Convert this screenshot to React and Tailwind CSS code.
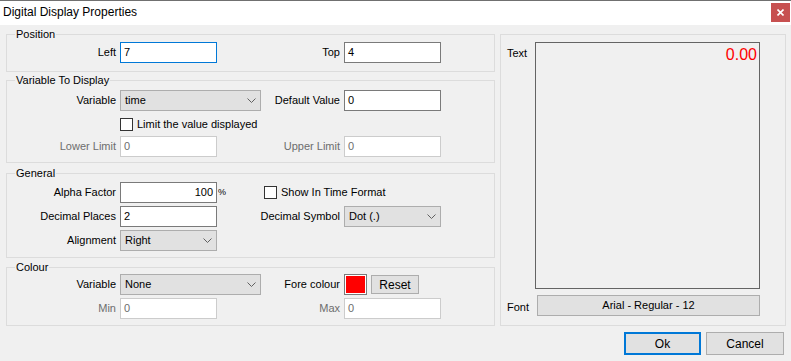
const font = { fontFamily: '"Liberation Sans", Arial, sans-serif' };

function Chevron() {
  return (
    <svg width="9" height="5" viewBox="0 0 9 5" className="shrink-0">
      <path d="M0.5 0.5 L4.5 4.5 L8.5 0.5" fill="none" stroke="#606060" strokeWidth="1" />
    </svg>
  );
}

function Group({ title, className, children }) {
  return (
    <div className={`relative border border-[#dcdcdc] ${className}`}>
      <span className="absolute -top-[8px] left-[8px] px-[1px] bg-[#f0f0f0] text-[11px] leading-[14px] text-black">
        {title}
      </span>
      {children}
    </div>
  );
}

function Label({ w, children, disabled }) {
  return (
    <div
      className={`shrink-0 text-right pr-[4px] text-[11px] leading-[13px] ${disabled ? 'text-[#6d6d6d]' : 'text-black'}`}
      style={{ width: w }}
    >
      {children}
    </div>
  );
}

function Input({ value, w = 97, focused, disabled, right }) {
  return (
    <div
      className={`h-[21px] shrink-0 bg-white border flex items-center px-[3px] text-[11px] leading-[13px] ${
        focused ? 'border-[#0078d7]' : disabled ? 'border-[#cccccc] text-[#6d6d6d]' : 'border-[#7a7a7a] text-black'
      } ${right ? 'justify-end' : ''}`}
      style={{ width: w }}
    >
      {value}
    </div>
  );
}

function Select({ value, w = 97 }) {
  return (
    <div
      className="h-[21px] shrink-0 bg-[#e1e1e1] border border-[#adadad] flex items-center justify-between pl-[4px] pr-[4px] text-[11px] leading-[13px] text-black"
      style={{ width: w }}
    >
      <span>{value}</span>
      <Chevron />
    </div>
  );
}

function Checkbox({ label }) {
  return (
    <div className="flex items-center text-[11px] leading-[13px] text-black">
      <div className="w-[13px] h-[13px] border border-[#333333] bg-white mr-[4px]" />
      <span>{label}</span>
    </div>
  );
}

export default function App() {
  return (
    <div className="w-[791px] h-[361px] bg-[#f0f0f0] border-t border-[#707070] overflow-hidden" style={font}>
      {/* Title bar */}
      <div className="h-[24px] bg-white flex items-start justify-between">
        <span className="pl-[3px] pt-[4px] text-[12px] leading-[15px] text-black">Digital Display Properties</span>
        <div className="mt-[2px] mr-[1px] w-[19px] h-[19px] bg-[#c75050] flex items-center justify-center">
          <svg width="7" height="7" viewBox="0 0 7 7">
            <path d="M0.5 0.5 L6.5 6.5 M6.5 0.5 L0.5 6.5" stroke="#ffffff" strokeWidth="1.6" />
          </svg>
        </div>
      </div>

      <div className="flex pl-[6px] pt-[9px]">
        {/* Left column */}
        <div className="w-[489px] flex flex-col">
          <Group title="Position" className="h-[38px] pt-[7px]">
            <div className="flex items-center">
              <Label w={113}>Left</Label>
              <Input value="7" focused />
              <Label w={127}>Top</Label>
              <Input value="4" />
            </div>
          </Group>

          <Group title="Variable To Display" className="mt-[8px] h-[83px] pt-[9px]">
            <div className="flex items-center">
              <Label w={113}>Variable</Label>
              <Select value="time" w={141} />
              <Label w={83}>Default Value</Label>
              <Input value="0" />
            </div>
            <div className="mt-[7px] pl-[113px]">
              <Checkbox label="Limit the value displayed" />
            </div>
            <div className="mt-[5px] flex items-center">
              <Label w={113} disabled>Lower Limit</Label>
              <Input value="0" disabled />
              <Label w={127} disabled>Upper Limit</Label>
              <Input value="0" disabled />
            </div>
          </Group>

          <Group title="General" className="mt-[10px] h-[85px] pt-[8px]">
            <div className="flex items-center">
              <Label w={113}>Alpha Factor</Label>
              <Input value="100" right />
              <span className="text-[9px] ml-[1px] w-[46px] text-black">%</span>
              <Checkbox label="Show In Time Format" />
            </div>
            <div className="mt-[3px] flex items-center">
              <Label w={113}>Decimal Places</Label>
              <Input value="2" />
              <Label w={127}>Decimal Symbol</Label>
              <Select value="Dot (.)" />
            </div>
            <div className="mt-[3px] flex items-center">
              <Label w={113}>Alignment</Label>
              <Select value="Right" />
            </div>
          </Group>

          <Group title="Colour" className="mt-[9px] h-[59px] pt-[6px]">
            <div className="flex items-center">
              <Label w={113}>Variable</Label>
              <Select value="None" w={141} />
              <Label w={83}>Fore colour</Label>
              <div className="w-[23px] h-[21px] border border-[#7a7a7a] bg-white p-[1px]">
                <div className="w-full h-full bg-[#ff0000]" />
              </div>
              <div className="ml-[4px] w-[48px] h-[19px] bg-[#e1e1e1] border border-[#adadad] flex items-center justify-center text-[12px] text-black">
                Reset
              </div>
            </div>
            <div className="mt-[3px] flex items-center">
              <Label w={113} disabled>Min</Label>
              <Input value="0" disabled />
              <Label w={127} disabled>Max</Label>
              <Input value="0" disabled />
            </div>
          </Group>
        </div>

        {/* Right column */}
        <div className="ml-[5px] flex flex-col">
          <div className="w-[286px] h-[292px] border border-[#dcdcdc] flex flex-col pt-[7px]">
            <div className="flex">
              <span className="w-[34px] pl-[6px] pt-[5px] text-[11px] leading-[13px] text-black">Text</span>
              <div className="w-[225px] h-[247px] border border-[#646464] flex justify-end pr-[2px] pt-[3px]">
                <span className="text-[16px] leading-[18px] text-[#ff0000]" style={{ fontFamily: 'Arial, "Liberation Sans", sans-serif' }}>0.00</span>
              </div>
            </div>
            <div className="mt-[6px] flex items-center">
              <span className="w-[36px] pl-[6px] pt-[4px] text-[11px] leading-[13px] text-black">Font</span>
              <div className="w-[223px] h-[21px] bg-[#e1e1e1] border border-[#adadad] flex items-center justify-center text-[11px] text-black">
                Arial - Regular - 12
              </div>
            </div>
          </div>
          <div className="mt-[6px] flex pl-[124px]">
            <div className="w-[77px] h-[23px] bg-[#e1e1e1] border-2 border-[#0078d7] flex items-center justify-center text-[12px] text-black">
              Ok
            </div>
            <div className="ml-[5px] w-[78px] h-[23px] bg-[#e1e1e1] border border-[#adadad] flex items-center justify-center text-[12px] text-black">
              Cancel
            </div>
          </div>
        </div>
      </div>
    </div>
  );
}
